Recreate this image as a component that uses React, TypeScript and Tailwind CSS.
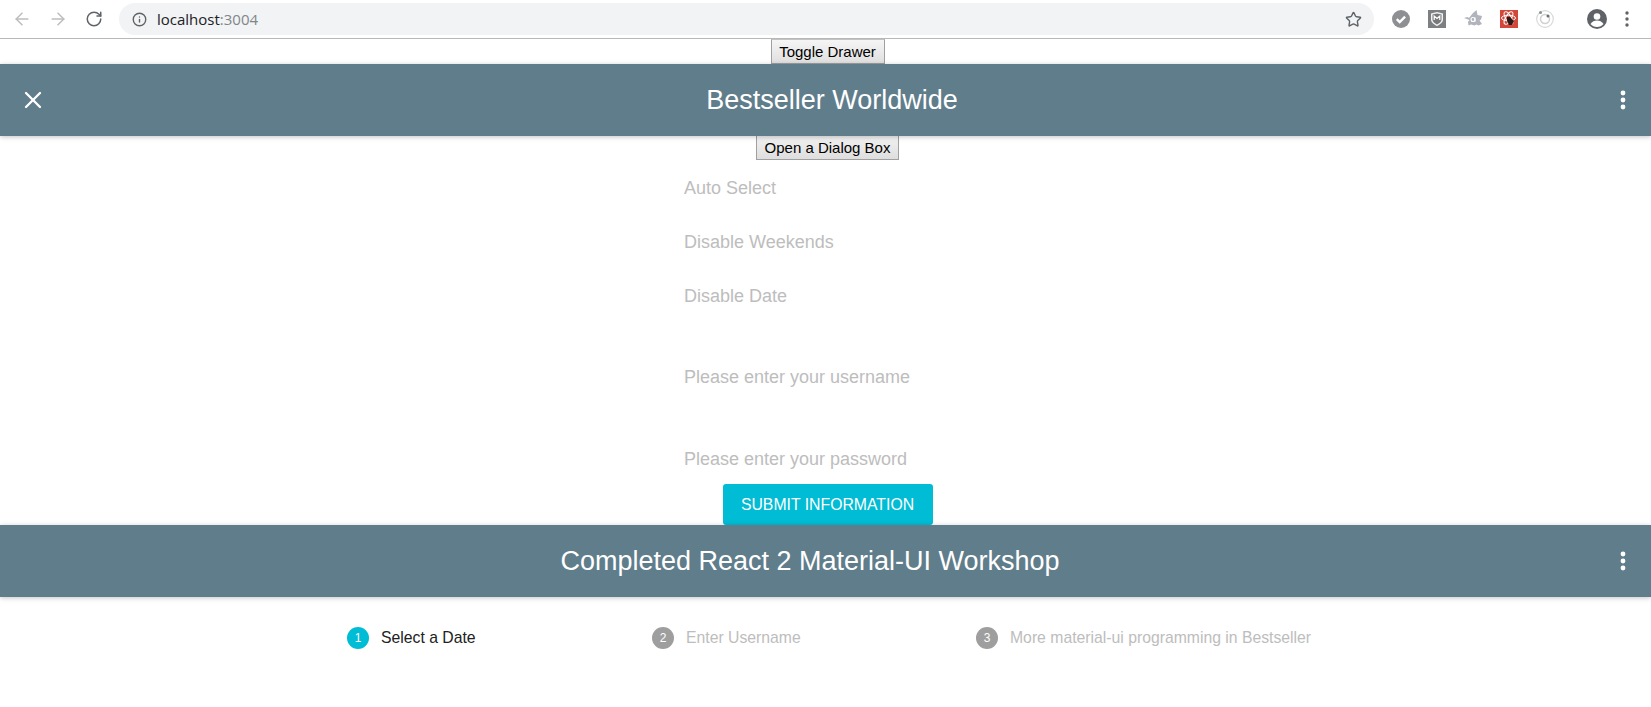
import { ArrowLeft, ArrowRight, RotateCw, Info, Star, X } from "lucide-react";

const fieldRows = [
  { label: "Auto Select", cls: "h-[54px]" },
  { label: "Disable Weekends", cls: "h-[54px]" },
  { label: "Disable Date", cls: "h-[54px]" },
  { label: "Please enter your username", cls: "h-[81px] pt-[27px]" },
  { label: "Please enter your password", cls: "h-[79px] pt-[31px]" },
];

const steps = [
  { n: 1, label: "Select a Date", active: true, cls: "w-[305px]" },
  { n: 2, label: "Enter Username", active: false, cls: "w-[324px]" },
  { n: 3, label: "More material-ui programming in Bestseller", active: false, cls: "" },
];

function Dots() {
  return (
    <svg className="w-6 h-6" viewBox="0 0 24 24" fill="#fff">
      <circle cx="12" cy="5" r="2.4" />
      <circle cx="12" cy="12" r="2.4" />
      <circle cx="12" cy="19" r="2.4" />
    </svg>
  );
}

function Extensions() {
  return (
    <div className="flex items-center">
      {/* check */}
      <svg className="w-[18px] h-[18px]" viewBox="0 0 18 18">
        <circle cx="9" cy="9" r="9" fill="#8d8f92" />
        <path d="M4.8 9.2l2.9 2.9 5.4-5.4" fill="none" stroke="#fff" strokeWidth="2.4" />
      </svg>
      {/* shield */}
      <svg className="w-[18px] h-[18px] ml-[18px]" viewBox="0 0 18 18">
        <rect width="18" height="18" fill="#7d8082" />
        <path d="M3 3.500l6-1.500 6 1.500v6c0 3-3 5-6 6.500-3-1.500-6-3.500-6-6.500z" fill="#f2f2f2" />
        <path d="M4.500 4.500l4.500-1 4.500 1v5c0 2.300-2.300 3.800-4.500 5-2.200-1.200-4.500-2.700-4.500-5z" fill="#77797b" />
        <path d="M6.200 10V6l2.800 2.500L11.800 6v4" fill="none" stroke="#fff" strokeWidth="1.200" />
      </svg>
      {/* avast-like blob */}
      <svg className="w-[18px] h-[18px] ml-[18px]" viewBox="0 0 18 18">
        <path d="M0 8l3.500-1 1.500 1 4-5 3.500-3 1 5 4.500 1-1 3.500-1.500 1 2.500 3.500-3.500 1.500-2-1-2 1-3.500-1-2.500 1-.5-3.500 1.500-2z" fill="#b1b3bd" />
        <circle cx="9" cy="9.500" r="2" fill="none" stroke="#fff" strokeWidth="1.100" />
        <path d="M11 7.500v4.200" stroke="#fff" strokeWidth="1.100" />
      </svg>
      {/* react-bug */}
      <svg className="w-[18px] h-[18px] ml-[18px]" viewBox="0 0 18 18">
        <rect width="18" height="18" fill="#d2473a" />
        <ellipse cx="8.500" cy="8" rx="7" ry="2.800" fill="none" stroke="#fff" strokeWidth="1" />
        <ellipse cx="8.500" cy="8" rx="7" ry="2.800" fill="none" stroke="#fff" strokeWidth="1" transform="rotate(60 8.500 8)" />
        <ellipse cx="8.500" cy="8" rx="7" ry="2.800" fill="none" stroke="#fff" strokeWidth="1" transform="rotate(-60 8.500 8)" />
        <path d="M7 7l3 0 4 4-2 4-3 0-2-4z" fill="#2b1a18" />
      </svg>
      {/* target */}
      <svg className="w-[18px] h-[18px] ml-[18px]" viewBox="0 0 18 18">
        <circle cx="9" cy="9" r="8.300" fill="none" stroke="#d8d9da" strokeWidth="1.200" />
        <circle cx="9" cy="9" r="4.500" fill="none" stroke="#d0d1d2" strokeWidth="1.500" />
        <circle cx="4.500" cy="2.500" r="1.500" fill="#8d8f92" />
        <circle cx="12" cy="6" r="1.500" fill="#6b6d70" />
      </svg>
    </div>
  );
}

function Header({ title, close, cls }: { title: string; close?: boolean; cls: string }) {
  return (
    <header className={`relative z-10 h-[72px] shrink-0 bg-[#607d8b] flex items-center justify-center shadow-[0_1px_6px_rgba(0,0,0,0.12),0_1px_4px_rgba(0,0,0,0.12)] ${cls}`}>
      {close && (
        <X className="absolute left-[19px] top-[22px] w-7 h-7 text-white" strokeWidth={2} />
      )}
      <h1 className="text-[27px] text-white">{title}</h1>
      <div className="absolute right-[16px] top-6">
        <Dots />
      </div>
    </header>
  );
}

export default function App() {
  return (
    <div className="w-[1651px] h-[707px] overflow-hidden bg-white flex flex-col font-['Liberation_Sans',Arial,sans-serif]">
      {/* Browser toolbar */}
      <div className="h-[39px] shrink-0 bg-white border-b border-[#b8b8b8] flex items-center pl-[12px] pr-[10px]">
        <ArrowLeft className="w-[20px] h-[20px] text-[#bcbdbf]" strokeWidth={1.800} />
        <ArrowRight className="w-[20px] h-[20px] ml-[16px] text-[#bcbdbf]" strokeWidth={1.800} />
        <RotateCw className="w-[18px] h-[18px] ml-[17px] text-[#5f6368]" strokeWidth={2} />
        <div className="ml-[16px] h-[32px] w-[1255px] rounded-full bg-[#f1f3f4] flex items-center pl-[13px] pr-[12px]">
          <Info className="w-[15px] h-[15px] text-[#5f6368]" strokeWidth={2.200} />
          <span className="ml-[10px] text-[15px] font-['Open_Sans',sans-serif] text-[#80868b]">
            <span className="text-[#202124]">localhost</span>:3004
          </span>
          <Star className="ml-auto w-[17px] h-[17px] text-[#5f6368]" strokeWidth={2} />
        </div>
        <div className="ml-[18px]">
          <Extensions />
        </div>
        <svg className="ml-[33px] w-[20px] h-[20px]" viewBox="0 0 20 20">
          <circle cx="10" cy="10" r="10" fill="#5f6368" />
          <circle cx="10" cy="7.500" r="3.300" fill="#fff" />
          <path d="M3.500 15c1.500-2.500 4-3.500 6.500-3.500s5 1 6.500 3.500c-1.500 2-4 3-6.500 3s-5-1-6.500-3z" fill="#fff" />
        </svg>
        <svg className="ml-[18px] w-[4px] h-[16px]" viewBox="0 0 4 16" fill="#5f6368">
          <circle cx="2" cy="2" r="1.700" />
          <circle cx="2" cy="8" r="1.700" />
          <circle cx="2" cy="14" r="1.700" />
        </svg>
      </div>

      {/* Page */}
      <div className="flex justify-center h-[25px] shrink-0 pl-[4px]">
        <button className="w-[114px] h-[25px] bg-gradient-to-b from-[#f5f5f5] to-[#e0e0e0] border border-[#a0a0a0] border-t-[#c4c4c4] text-[15px] leading-[22px] text-black">
          Toggle Drawer
        </button>
      </div>
      <Header title="Bestseller Worldwide" close cls="pl-[13px]" />
      <div className="flex justify-center h-[24px] shrink-0 pl-[4px]">
        <button className="w-[143px] h-[24px] bg-gradient-to-b from-[#f2f2f2] to-[#dedede] border border-[#a0a0a0] border-t-0 text-[15px] leading-[20px] text-black">
          Open a Dialog Box
        </button>
      </div>

      <div className="h-[365px] shrink-0 flex flex-col items-center">
        <div className="w-[283px] h-[324px] shrink-0 pt-px">
          {fieldRows.map((row) => (
            <div key={row.label} className={`${row.cls} flex items-center text-[18px] text-[#bdbdbd]`}>
              {row.label}
            </div>
          ))}
        </div>
        <button className="ml-[4px] w-[210px] h-[41px] shrink-0 rounded-[3px] bg-[#00bcd4] text-white text-[15.8px]">
          SUBMIT INFORMATION
        </button>
      </div>

      <Header title="Completed React 2 Material-UI Workshop" cls="pr-[31px]" />

      {/* Stepper */}
      <div className="h-[81px] pl-[347px] flex items-center">
        {steps.map((step) => (
          <div key={step.n} className={`${step.cls} flex items-center`}>
            <span
              className={`w-[22px] h-[22px] rounded-full flex items-center justify-center text-[12px] text-white ${
                step.active ? "bg-[#00bcd4]" : "bg-[#9e9e9e]"
              }`}
            >
              {step.n}
            </span>
            <span className={`ml-[12px] text-[15.75px] ${step.active ? "text-[#212121]" : "text-[#bdbdbd]"}`}>
              {step.label}
            </span>
          </div>
        ))}
      </div>
    </div>
  );
}
